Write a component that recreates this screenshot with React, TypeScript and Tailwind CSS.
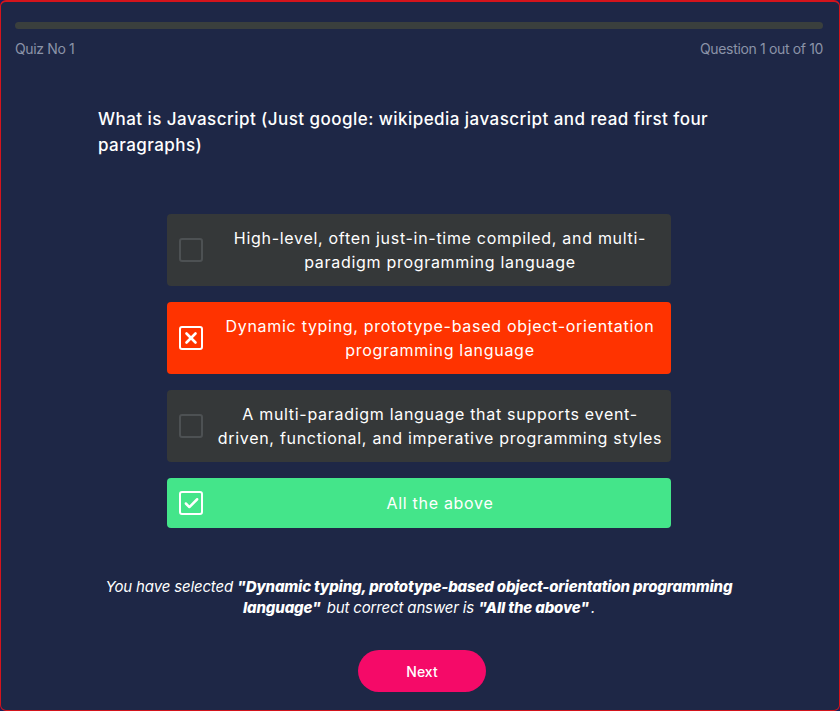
import { Check, X } from 'lucide-react';

interface Option {
  text: string;
  state: 'none' | 'wrong' | 'right';
}

const options: Option[] = [
  { text: 'High-level, often just-in-time compiled, and multi-paradigm programming language', state: 'none' },
  { text: 'Dynamic typing, prototype-based object-orientation programming language', state: 'wrong' },
  { text: 'A multi-paradigm language that supports event-driven, functional, and imperative programming styles', state: 'none' },
  { text: 'All the above', state: 'right' },
];

function OptionRow({ text, state }: Option) {
  const bg =
    state === 'wrong' ? 'bg-[#ff3300]' : state === 'right' ? 'bg-[#44e58a]' : 'bg-[#353839]';
  return (
    <div className={`${bg} rounded flex items-center min-h-[50px] py-3 pl-3`}>
      {/* Checkbox */}
      <div
        className={`w-6 h-6 flex-shrink-0 rounded-[3px] border-2 flex items-center justify-center ${
          state === 'none' ? 'border-[#4d5153]' : 'border-white'
        }`}
      >
        {state === 'wrong' && <X className="w-[18px] h-[18px] text-white" strokeWidth={3.5} />}
        {state === 'right' && <Check className="w-[17px] h-[17px] text-white" strokeWidth={3.5} />}
      </div>
      <p className="flex-1 ml-[12px] mr-[6px] text-center text-white text-[16px] leading-6 tracking-[0.7px]">{text}</p>
    </div>
  );
}

export default function App() {
  return (
    <div className="w-[840px] h-[711px] bg-[#1a1f5c] font-['Inter',sans-serif]">
      <div className="h-full border border-[#d4141c] border-t-2 bg-[#1e2746] rounded-[6px] flex flex-col pl-[14px] pr-[16px]">
        {/* Progress bar */}
        <div className="mt-[20px] h-[7px] w-full rounded-full bg-[#3a3f3d]" />
        <div className="flex justify-between mt-[10px] text-[14px] leading-5 text-[#8b93a8] tracking-tight">
          <span>Quiz No 1</span>
          <span>Question 1 out of 10</span>
        </div>

        {/* Question */}
        <h1 className="mt-[47px] ml-[83px] mr-[100px] text-white text-[17px] leading-[26px] font-medium tracking-[0.45px]">
          What is Javascript (Just google: wikipedia javascript and read first four paragraphs)
        </h1>

        {/* Options */}
        <div className="mt-[56px] w-[504px] self-center flex flex-col gap-4">
          {options.map((o) => (
            <OptionRow key={o.text} {...o} />
          ))}
        </div>

        {/* Feedback */}
        <p className="mt-[48px] self-center w-[640px] text-center text-white italic text-[15px] leading-[21px] tracking-[-0.15px]">
          You have selected <b className="font-extrabold pr-[2px]">"Dynamic typing, prototype-based object-orientation programming language"</b> but correct answer is <b className="font-extrabold pr-[2px]">"All the above"</b>.
        </p>

        <button className="mt-[32px] ml-[6px] self-center w-[128px] h-[42px] rounded-full bg-[#f50a68] text-white text-[14px] font-medium">
          Next
        </button>
      </div>
    </div>
  );
}
